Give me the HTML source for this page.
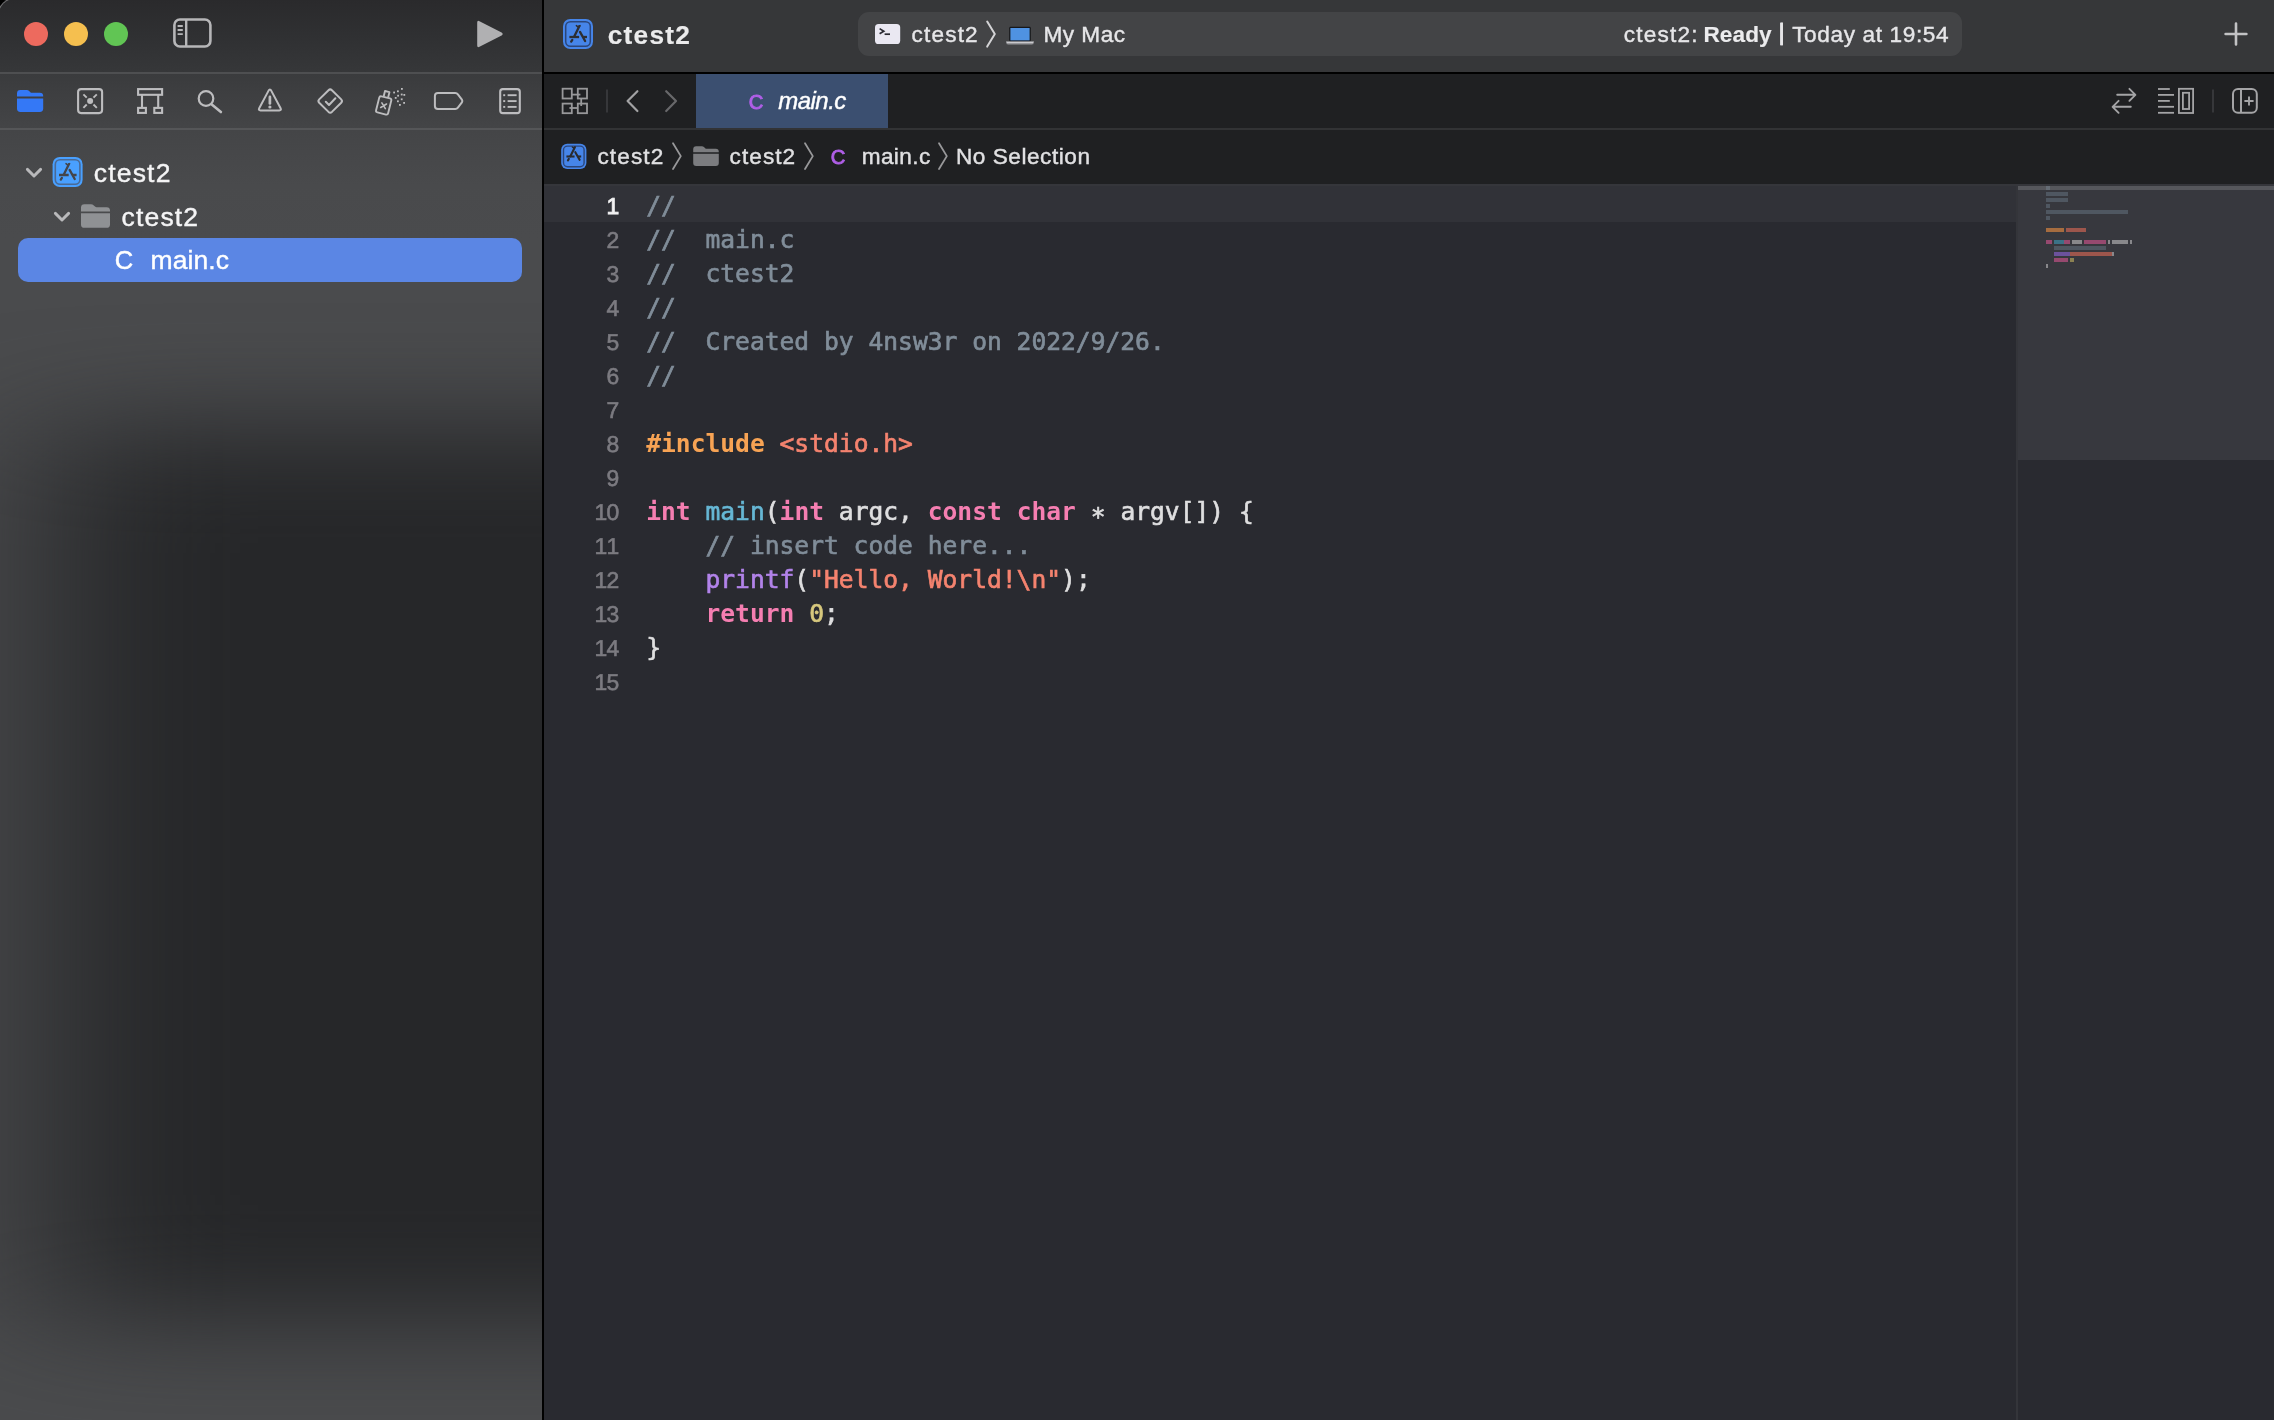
<!DOCTYPE html>
<html lang="en">
<head>
<meta charset="utf-8">
<title>ctest2 — main.c</title>
<style>
*{box-sizing:border-box;margin:0;padding:0}
html,body{width:2274px;height:1420px;background:#000}
#app{position:absolute;left:0;top:0;width:2274px;height:1420px;overflow:hidden;background:#000}
body{font-variant-ligatures:none;font-family:"Liberation Sans",sans-serif;color:#e4e4e6;position:relative}
.t{position:absolute;white-space:pre;line-height:1}
svg{position:absolute;overflow:visible}
/* ---------- sidebar ---------- */
#sidebar{position:absolute;left:-3px;top:-3px;width:545px;height:1423px;overflow:hidden;border-top-left-radius:20px;background:#4a4b4d}
#sb-in{position:absolute;left:3px;top:3px;width:542px;height:1420px}
#sb-rim{position:absolute;left:0;top:0;width:60px;height:60px;border-top-left-radius:20px;border-top:1.8px solid rgba(255,255,255,.34);border-left:1.8px solid rgba(255,255,255,.34);-webkit-mask-image:linear-gradient(135deg,#000 0,#000 30%,transparent 50%);mask-image:linear-gradient(135deg,#000 0,#000 30%,transparent 50%)}
#sb-grad{position:absolute;left:0;top:0;width:542px;height:420px;background:linear-gradient(to bottom,#2a2a2c 0px,#303133 40px,#363739 72px,#3a3b3d 74px,#3d3e40 90px,#444547 130px,#494a4c 185px,#4a4b4d 240px,#4a4b4d 420px)}
#sb-blob{position:absolute;left:44px;top:428px;width:500px;height:892px;background:#262729;filter:blur(52px);transform:scaleX(1.7);transform-origin:0 50%}
.hline{position:absolute;left:0;width:542px;height:2px}
#divider{position:absolute;left:542px;top:0;width:2px;height:1420px;background:#000}
.row-sel{position:absolute;left:18px;top:238px;width:504px;height:44px;border-radius:10px;background:#5b86e4}
/* ---------- main ---------- */
#main,#sidebar{will-change:transform}
#main{position:absolute;left:544px;top:0;width:1730px;height:1420px;background:#292a30;overflow:hidden}
#toolbar{position:absolute;left:0;top:0;width:1730px;height:72px;background:#363739}
#tb-line{position:absolute;left:0;top:72px;width:1730px;height:2px;background:#000}
#tabbar{position:absolute;left:0;top:74px;width:1730px;height:54px;background:#1f2022}
#tab{position:absolute;left:152px;top:74px;width:192px;height:54px;background:#3b4f70}
#tab-line{position:absolute;left:0;top:128px;width:1730px;height:2px;background:#323335}
#jumpbar{position:absolute;left:0;top:130px;width:1730px;height:54px;background:#1f2022}
#jb-line{position:absolute;left:0;top:184px;width:1730px;height:2px;background:#35363b}
#pill{position:absolute;left:314px;top:12px;width:1104px;height:44px;border-radius:11px;background:#434446}
#curline{position:absolute;left:0;top:186px;width:1473px;height:36px;background:#313238}
/* code */
.ln{font-kerning:none;text-rendering:geometricPrecision;position:absolute;left:0;width:74.4px;text-align:right;font-family:"Liberation Sans",sans-serif;font-size:22.9px;line-height:34px;height:34px;margin-top:0.6px;color:#7c7b81;letter-spacing:-0.75px;-webkit-text-stroke:0.6px #7c7b81}
.ln.cur{color:#f2f2f3;-webkit-text-stroke:0.85px #f2f2f3}
.cl{position:absolute;left:102.2px;font-family:"DejaVu Sans Mono","Liberation Mono",monospace;font-size:24.62px;line-height:34px;height:34px;white-space:pre;color:#dfdfe0;-webkit-text-stroke:0.65px}
.cm{color:#808d99}.kw{color:#f57eb1;font-weight:bold;-webkit-text-stroke:0}.pp{color:#f7a354;font-weight:bold;-webkit-text-stroke:0}.st{color:#f5836f}
.fn{color:#66b7d5}.lib{color:#b283ea}.nu{color:#d7c87d}.as{position:relative;top:5px}
/* minimap */
#mm-sep{position:absolute;left:1472px;top:186px;width:2px;height:1234px;background:#34353a}
#mm-view{position:absolute;left:1474px;top:186px;width:256px;height:274px;background:#37383e}
#mm-cur{position:absolute;left:1474px;top:186px;width:256px;height:4px;background:#56575c}
.mb{position:absolute;height:4px}
</style>
</head>
<body>
<div id="app">
<div id="sidebar"><div id="sb-in">
<div id="sb-grad"></div>
<div id="sb-blob"></div>
<div class="hline" style="top:72px;background:#4e4f51"></div>
<div class="hline" style="top:128px;background:#555658"></div>
<div class="row-sel"></div>
<svg width="542" height="1420" viewBox="0 0 542 1420" style="left:0;top:0" fill="none" stroke-linecap="round" stroke-linejoin="round">
  <!-- traffic lights -->
  <circle cx="36" cy="34" r="12" fill="#ed6a5e"/>
  <circle cx="76" cy="34" r="12" fill="#f5bf4f"/>
  <circle cx="116" cy="34" r="12" fill="#61c554"/>
  <!-- sidebar toggle -->
  <g stroke="#b6b6b8">
    <rect x="174.4" y="19.5" width="36" height="27" rx="5.5" stroke-width="2.6"/>
    <line x1="186.2" y1="20" x2="186.2" y2="46" stroke-width="2.4" stroke-linecap="butt"/>
    <g stroke-width="1.9" stroke-linecap="butt"><line x1="177.6" y1="26" x2="182.8" y2="26"/><line x1="177.6" y1="30" x2="182.8" y2="30"/><line x1="177.6" y1="34.1" x2="182.8" y2="34.1"/></g>
  </g>
  <!-- play -->
  <path d="M477.2 22.6 L477.2 45.4 Q477.2 48 479.5 46.8 L501.6 35.5 Q503.8 34 501.6 32.5 L479.5 21.2 Q477.2 20 477.2 22.6Z" fill="#b0b0b2"/>
  <!-- nav: folder (selected) -->
  <path d="M17 93.4 Q17 90 20.4 90 L26.6 90 Q28.2 90 29.4 91.2 L30.4 92.2 Q30.9 92.7 31.8 92.7 L39.8 92.7 Q43.2 92.7 43.2 96.1 L43.2 96.4 L17 96.4Z" fill="#3478f6"/>
  <path d="M17 98.4 L43.2 98.4 L43.2 108.6 Q43.2 112 39.8 112 L20.4 112 Q17 112 17 108.6Z" fill="#3478f6"/>
  <g stroke="#bdbdbf" stroke-width="2.1">
    <!-- source control / square x -->
    <rect x="78.1" y="89.1" width="24" height="24" rx="3"/>
    <circle cx="90.1" cy="101.1" r="3" fill="#bdbdbf" stroke="none"/>
    <g stroke-width="1.9" stroke-linecap="butt"><line x1="83.4" y1="94.4" x2="86.7" y2="97.7"/><line x1="96.8" y1="94.4" x2="93.5" y2="97.7"/><line x1="83.4" y1="107.8" x2="86.7" y2="104.5"/><line x1="96.8" y1="107.8" x2="93.5" y2="104.5"/></g>
    <!-- hierarchy -->
    <g stroke-linejoin="miter" stroke-linecap="butt">
      <rect x="138.1" y="89.1" width="24" height="5.7"/>
      <line x1="142" y1="95" x2="142" y2="107.5"/><line x1="158.2" y1="95" x2="158.2" y2="107.5"/>
      <rect x="138.1" y="107.9" width="7.8" height="5"/><rect x="154.3" y="107.9" width="7.8" height="5"/>
    </g>
    <!-- search -->
    <circle cx="206" cy="98.5" r="7.3" stroke-width="2.2"/>
    <line x1="211.8" y1="104.6" x2="220.9" y2="112" stroke-width="2.6"/>
    <!-- warning -->
    <path d="M268.6 90.6 Q269.9 88.4 271.2 90.6 L280.6 108.2 Q281.7 110.4 279.3 110.4 L260.5 110.4 Q258.1 110.4 259.2 108.2Z" stroke-width="2"/>
    <line x1="269.9" y1="96.9" x2="269.9" y2="103.4" stroke-width="2.7"/>
    <circle cx="269.9" cy="107" r="1.6" fill="#bdbdbf" stroke="none"/>
    <!-- test diamond -->
    <g transform="translate(0.2 0)"><path d="M328.3 90.2 Q330 88.6 331.7 90.2 L341 99.4 Q342.6 101 341 102.7 L331.7 111.9 Q330 113.5 328.3 111.9 L319 102.7 Q317.4 101 319 99.4Z" stroke-width="2"/>
    <path d="M325.6 101.8 L328.8 105 L335.2 98.2" stroke-width="2"/></g>
    <!-- debug spray -->
    <g transform="rotate(14 384 105)" stroke-width="1.9">
      <rect x="377.6" y="97.2" width="12.4" height="16.6" rx="1.8"/>
      <path d="M381.6 96.8 L381.6 91.2 L386.2 91.2 L386.2 96.8" stroke-linecap="butt"/>
      <path d="M381.4 103.4 L386.2 108.2 M386.2 103.4 L381.4 108.2" stroke-width="1.6"/>
    </g>
    <g fill="#bdbdbf" stroke="none" transform="translate(-0.2 0)">
      <rect x="401.2" y="88" width="1.8" height="1.8"/><rect x="397.2" y="90.4" width="1.8" height="1.8"/><rect x="393.4" y="91.6" width="1.8" height="1.8"/>
      <rect x="401" y="93.6" width="1.8" height="1.8"/><rect x="397.4" y="94.8" width="1.8" height="1.8"/><rect x="403.6" y="94" width="1.8" height="1.8"/>
      <rect x="395" y="97" width="1.8" height="1.8"/><rect x="401" y="98.4" width="1.8" height="1.8"/><rect x="397.2" y="100.4" width="1.8" height="1.8"/>
      <rect x="403.4" y="102" width="1.8" height="1.8"/><rect x="399.2" y="104" width="1.8" height="1.8"/>
    </g>
    <!-- breakpoint tag -->
    <path transform="translate(-1.1 0)" d="M439 93.1 L456.4 93.1 Q458 93.1 459 94.4 L463 99.6 Q463.9 101 463 102.4 L459 107.6 Q458 108.9 456.4 108.9 L439 108.9 Q436 108.9 436 105.9 L436 96.1 Q436 93.1 439 93.1Z" stroke-width="2"/>
    <!-- report list -->
    <rect x="500.2" y="89.1" width="19.6" height="24" rx="2.6"/>
    <g stroke-width="1.9" stroke-linecap="butt"><line x1="507.6" y1="95.2" x2="516.6" y2="95.2"/><line x1="507.6" y1="101.1" x2="516.6" y2="101.1"/><line x1="507.6" y1="106.9" x2="516.6" y2="106.9"/>
    <line x1="503.2" y1="95.2" x2="505.2" y2="95.2"/><line x1="503.2" y1="101.1" x2="505.2" y2="101.1"/><line x1="503.2" y1="106.9" x2="505.2" y2="106.9"/></g>
  </g>
  <!-- tree chevrons -->
  <g stroke="#b9b9bb" stroke-width="2.9">
    <path d="M27.4 169.4 L34 176 L40.6 169.4"/>
    <path d="M55.4 213.4 L62 220 L68.6 213.4"/>
  </g>
  <!-- project icon -->
  <g id="projicon">
    <rect x="52.6" y="157" width="30" height="30" rx="7.2" fill="#49a0ff"/>
    <rect x="55.3" y="159.7" width="24.6" height="24.6" rx="4.8" stroke="#4a6a96" stroke-width="1.6"/>
    <g stroke="#44454a" stroke-width="2.3">
      <path d="M68.9 164.2 L63.7 174.8"/>
      <path d="M66 163.7 L67.5 164.9 L69.6 163.7" stroke-width="1.6"/>
      <path d="M69.6 169.9 L74.7 179"/>
      <path d="M59 175 L68.7 175" stroke-linecap="butt"/>
      <path d="M72.8 175 L76.6 175" stroke-linecap="butt"/>
      <path d="M61.9 177.9 L60.8 179.6"/>
    </g>
  </g>
  <!-- folder gray -->
  <path d="M81 207.6 Q81 204.2 84.4 204.2 L91 204.2 Q92.6 204.2 93.8 205.4 L95 206.6 Q95.6 207.2 96.6 207.2 L106.6 207.2 Q110 207.2 110 210.6 L110 211.4 L81 211.4Z" fill="#8f9194"/>
  <path d="M81 213.2 L110 213.2 L110 224.4 Q110 227.8 106.6 227.8 L84.4 227.8 Q81 227.8 81 224.4Z" fill="#8f9194"/>
</svg>

<svg width="542" height="1420" viewBox="0 0 542 1420" style="left:0;top:0;font-family:&quot;Liberation Sans&quot;, sans-serif">
<text x="93.8" y="181.9" fill="#f4f4f5" stroke="#f4f4f5" stroke-width="0.42" style="font-size:26.5px;letter-spacing:1.18px;">ctest2</text>
<text x="121.5" y="225.6" fill="#f4f4f5" stroke="#f4f4f5" stroke-width="0.42" style="font-size:26.5px;letter-spacing:1.18px;">ctest2</text>
<text x="114.8" y="269.3" fill="#ffffff" stroke="#ffffff" stroke-width="0.5" style="font-size:25.5px;letter-spacing:0.00px;">C</text>
<text x="150.5" y="269.3" fill="#ffffff" stroke="#ffffff" stroke-width="0.42" style="font-size:26.5px;letter-spacing:0.10px;">main.c</text>
</svg>
</div><div id="sb-rim"></div></div>
<div id="divider"></div>
<div id="main">
<div id="toolbar"></div>
<div id="tb-line"></div>
<div id="tabbar"></div>
<div id="tab"></div>
<div id="tab-line"></div>
<div id="jumpbar"></div>
<div id="jb-line"></div>
<div id="pill"></div>
<div id="curline"></div>
<div id="mm-sep"></div>
<div id="mm-view"></div>
<div id="mm-cur"></div>
<div class="mb" style="left:1502px;top:186px;width:4px;background:#656c75"></div><div class="mb" style="left:1502px;top:192px;width:22px;background:#4f5761"></div><div class="mb" style="left:1502px;top:198px;width:22px;background:#4f5761"></div><div class="mb" style="left:1502px;top:204px;width:4px;background:#4f5761"></div><div class="mb" style="left:1502px;top:210px;width:82px;background:#4f5761"></div><div class="mb" style="left:1502px;top:216px;width:4px;background:#4f5761"></div><div class="mb" style="left:1502px;top:228px;width:18px;background:#a66c3f"></div><div class="mb" style="left:1522px;top:228px;width:20px;background:#9d564c"></div><div class="mb" style="left:1502px;top:240px;width:6px;background:#96496f"></div><div class="mb" style="left:1510px;top:240px;width:10px;background:#3b7287"></div><div class="mb" style="left:1520px;top:240px;width:6px;background:#96496f"></div><div class="mb" style="left:1528px;top:240px;width:10px;background:#88888b"></div><div class="mb" style="left:1540px;top:240px;width:22px;background:#96496f"></div><div class="mb" style="left:1564px;top:240px;width:2px;background:#88888b"></div><div class="mb" style="left:1568px;top:240px;width:16px;background:#88888b"></div><div class="mb" style="left:1586px;top:240px;width:2px;background:#88888b"></div><div class="mb" style="left:1510px;top:246px;width:52px;background:#4f5761"></div><div class="mb" style="left:1510px;top:252px;width:16px;background:#6c529c"></div><div class="mb" style="left:1526px;top:252px;width:42px;background:#9d564c"></div><div class="mb" style="left:1568px;top:252px;width:2px;background:#88888b"></div><div class="mb" style="left:1510px;top:258px;width:14px;background:#96496f"></div><div class="mb" style="left:1526px;top:258px;width:4px;background:#8b8152"></div><div class="mb" style="left:1502px;top:264px;width:2px;background:#88888b"></div>
<div class="ln cur" style="top:188.6px">1</div><div class="cl" style="top:188.6px"><span class="cm">//</span></div>
<div class="ln" style="top:222.6px">2</div><div class="cl" style="top:222.6px"><span class="cm">//  main.c</span></div>
<div class="ln" style="top:256.6px">3</div><div class="cl" style="top:256.6px"><span class="cm">//  ctest2</span></div>
<div class="ln" style="top:290.6px">4</div><div class="cl" style="top:290.6px"><span class="cm">//</span></div>
<div class="ln" style="top:324.6px">5</div><div class="cl" style="top:324.6px"><span class="cm">//  Created by 4nsw3r on 2022/9/26.</span></div>
<div class="ln" style="top:358.6px">6</div><div class="cl" style="top:358.6px"><span class="cm">//</span></div>
<div class="ln" style="top:392.6px">7</div><div class="cl" style="top:392.6px"></div>
<div class="ln" style="top:426.6px">8</div><div class="cl" style="top:426.6px"><span class="pp">#include </span><span class="st">&lt;stdio.h&gt;</span></div>
<div class="ln" style="top:460.6px">9</div><div class="cl" style="top:460.6px"></div>
<div class="ln" style="top:494.6px">10</div><div class="cl" style="top:494.6px"><span class="kw">int</span> <span class="fn">main</span>(<span class="kw">int</span> argc, <span class="kw">const</span> <span class="kw">char</span> <span class="as">*</span> argv[]) {</div>
<div class="ln" style="top:528.6px">11</div><div class="cl" style="top:528.6px">    <span class="cm">// insert code here...</span></div>
<div class="ln" style="top:562.6px">12</div><div class="cl" style="top:562.6px">    <span class="lib">printf</span>(<span class="st">&quot;Hello, World!\n&quot;</span>);</div>
<div class="ln" style="top:596.6px">13</div><div class="cl" style="top:596.6px">    <span class="kw">return</span> <span class="nu">0</span>;</div>
<div class="ln" style="top:630.6px">14</div><div class="cl" style="top:630.6px">}</div>
<div class="ln" style="top:664.6px">15</div><div class="cl" style="top:664.6px"></div>
<svg width="1730" height="1420" viewBox="544 0 1730 1420" style="left:0;top:0" fill="none" stroke-linecap="round" stroke-linejoin="round">
  <!-- title project icon -->
  <g>
    <rect x="563" y="19" width="30" height="30" rx="7.2" fill="#4685e9"/>
    <rect x="565.7" y="21.7" width="24.6" height="24.6" rx="4.8" stroke="#2b467a" stroke-width="1.5"/>
    <g stroke="#2d2e32" stroke-width="2.3" transform="translate(510.4 -138)">
      <path d="M68.9 164.2 L63.7 174.8"/>
      <path d="M66 163.7 L67.5 164.9 L69.6 163.7" stroke-width="1.6"/>
      <path d="M69.6 169.9 L74.7 179"/>
      <path d="M59 175 L68.7 175" stroke-linecap="butt"/>
      <path d="M72.8 175 L76.6 175" stroke-linecap="butt"/>
      <path d="M61.9 177.9 L60.8 179.6"/>
    </g>
  </g>
  <!-- scheme terminal icon -->
  <rect x="875" y="24" width="25.2" height="20" rx="3.6" fill="#eae8f2"/>
  <path d="M879.6 28.6 L883.8 31.2 L879.6 33.8" stroke="#2b2b33" stroke-width="1.7" stroke-linecap="butt" stroke-linejoin="miter"/>
  <line x1="884.6" y1="34.2" x2="890" y2="34.2" stroke="#2b2b33" stroke-width="1.7" stroke-linecap="butt"/>
  <!-- pill chevron -->
  <path d="M987.2 21.6 L994.8 34.1 L987.2 46.6" stroke="#d4d4d6" stroke-width="2"/>
  <!-- laptop -->
  <rect x="1009.2" y="26.8" width="21.6" height="14.6" rx="1.4" fill="#16171a"/>
  <rect x="1010.4" y="28" width="19.2" height="12.4" fill="#4f92e2"/>
  <path d="M1006 41.4 L1034 41.4 L1033.2 43.6 Q1033 44.2 1032 44.2 L1008 44.2 Q1007 44.2 1006.8 43.6Z" fill="#c9c9cd"/>
  <rect x="1006.6" y="43.2" width="26.8" height="1" fill="#8c8c90"/>
  <!-- plus -->
  <path d="M2225.6 34 L2246.4 34 M2236 23.6 L2236 44.4" stroke="#c2c2c4" stroke-width="2.6"/>
  <!-- tabbar left: grid -->
  <g stroke="#98989a" stroke-width="1.8" stroke-linejoin="miter" stroke-linecap="butt">
    <rect x="562.6" y="88.7" width="9.2" height="9.8"/>
    <rect x="577.8" y="88.7" width="9.2" height="9.8"/>
    <rect x="562.6" y="103.6" width="9.2" height="9.6"/>
    <rect x="577.8" y="103.6" width="9.2" height="9.6"/>
    <line x1="571.8" y1="94.6" x2="580.4" y2="94.6"/>
    <line x1="581.2" y1="98.5" x2="581.2" y2="106"/>
    <line x1="569.4" y1="108" x2="577.8" y2="108"/>
  </g>
  <line x1="607" y1="89.4" x2="607" y2="112.6" stroke="#3d3e41" stroke-width="1.6" stroke-linecap="butt"/>
  <path d="M637.4 91.2 L627.6 101.1 L637.4 111" stroke="#a2a2a4" stroke-width="2.2"/>
  <path d="M666.2 91.2 L676 101.1 L666.2 111" stroke="#68686b" stroke-width="2.2"/>
  <!-- jumpbar icon -->
  <g>
    <rect x="561.2" y="143.8" width="25.2" height="25.2" rx="6" fill="#4685e9"/>
    <rect x="563.5" y="146.1" width="20.6" height="20.6" rx="4" stroke="#2b467a" stroke-width="1.4"/>
    <g stroke="#2a2b2f" stroke-width="2.5" transform="translate(516.85 9.5) scale(0.84)">
      <path d="M68.9 164.2 L63.7 174.8"/>
      <path d="M66 163.7 L67.5 164.9 L69.6 163.7" stroke-width="1.6"/>
      <path d="M69.6 169.9 L74.7 179"/>
      <path d="M59 175 L68.7 175" stroke-linecap="butt"/>
      <path d="M72.8 175 L76.6 175" stroke-linecap="butt"/>
      <path d="M61.9 177.9 L60.8 179.6"/>
    </g>
  </g>
  <!-- jumpbar chevrons -->
  <g stroke="#98989a" stroke-width="1.8">
    <path d="M673 143.2 L680.8 156.1 L673 169"/>
    <path d="M805 143.2 L812.8 156.1 L805 169"/>
    <path d="M939 143.2 L946.8 156.1 L939 169"/>
  </g>
  <!-- jumpbar folder -->
  <path d="M693.2 149.2 Q693.2 146.2 696.2 146.2 L701.8 146.2 Q703.2 146.2 704.2 147.2 L705.2 148.2 Q705.8 148.8 706.8 148.8 L715.8 148.8 Q718.8 148.8 718.8 151.8 L718.8 152.2 L693.2 152.2Z" fill="#7b7c7f"/>
  <path d="M693.2 153.8 L718.8 153.8 L718.8 163 Q718.8 166 715.8 166 L696.2 166 Q693.2 166 693.2 163Z" fill="#7b7c7f"/>
  <!-- tabbar right icons -->
  <g stroke="#a4a4a6" stroke-width="1.9">
    <path d="M2117.2 94.8 L2135.2 94.8 M2129.4 88.8 L2135.4 94.8 L2129.4 100.8"/>
    <path d="M2130.8 106.8 L2112.8 106.8 M2118.6 100.8 L2112.6 106.8 L2118.6 112.8"/>
  </g>
  <g stroke="#a4a4a6" stroke-width="1.8" stroke-linecap="butt" stroke-linejoin="miter">
    <line x1="2158" y1="89" x2="2169.8" y2="89"/><line x1="2158" y1="94.9" x2="2174" y2="94.9"/><line x1="2158" y1="100.9" x2="2169.8" y2="100.9"/><line x1="2158" y1="106.8" x2="2174" y2="106.8"/><line x1="2158" y1="112.8" x2="2174" y2="112.8"/>
    <rect x="2178.9" y="88.8" width="14.2" height="24.2"/>
    <rect x="2182.9" y="92.8" width="6.2" height="16.2"/>
  </g>
  <line x1="2213" y1="89.4" x2="2213" y2="112.4" stroke="#3d3e41" stroke-width="1.6" stroke-linecap="butt"/>
  <g stroke="#a4a4a6" stroke-width="2">
    <rect x="2233" y="89" width="23.8" height="23.8" rx="5"/>
    <line x1="2241" y1="89.4" x2="2241" y2="112.4" stroke-linecap="butt"/>
    <path d="M2244.4 101 L2253.6 101 M2249 96.4 L2249 105.6" stroke-width="1.9" stroke-linecap="butt"/>
  </g>
</svg>

<svg width="1730" height="1420" viewBox="544 0 1730 1420" style="left:0;top:0;font-family:&quot;Liberation Sans&quot;, sans-serif">
<text x="607.7" y="43.9" fill="#ebebec" stroke="#ebebec" stroke-width="0.15" style="font-size:26.3px;letter-spacing:1.24px;font-weight:bold">ctest2</text>
<text x="911.6" y="42.0" fill="#e6e6e8" stroke="#e6e6e8" stroke-width="0.42" style="font-size:22.6px;letter-spacing:1.16px;">ctest2</text>
<text x="1043.5" y="42.0" fill="#e6e6e8" stroke="#e6e6e8" stroke-width="0.42" style="font-size:22.6px;letter-spacing:0.48px;">My Mac</text>
<text x="1623.7" y="41.8" fill="#e6e6e8" stroke="#e6e6e8" stroke-width="0.42" style="font-size:22.6px;letter-spacing:1.23px;">ctest2:</text>
<text x="1703.4" y="41.8" fill="#ececee" stroke="#ececee" stroke-width="0.15" style="font-size:22.6px;letter-spacing:0.10px;font-weight:bold">Ready</text>
<text x="1792.2" y="41.8" fill="#e6e6e8" stroke="#e6e6e8" stroke-width="0.42" style="font-size:22.6px;letter-spacing:0.63px;">Today at 19:54</text>
<text x="1778.5" y="40.0" fill="#e6e6e8" stroke="#e6e6e8" stroke-width="0.7" style="font-size:23.4px;letter-spacing:0.00px;">|</text>
<text x="748.7" y="109.2" fill="#b05fe8" stroke="#b05fe8" stroke-width="0.9" style="font-size:20.2px;letter-spacing:0.00px;">C</text>
<text x="778.3" y="109.2" fill="#ffffff" stroke="#ffffff" stroke-width="0.42" style="font-size:24px;letter-spacing:-0.54px;font-style:italic">main.c</text>
<text x="597.4" y="164.2" fill="#e0e0e2" stroke="#e0e0e2" stroke-width="0.42" style="font-size:22.6px;letter-spacing:1.12px;">ctest2</text>
<text x="729.6" y="164.2" fill="#e0e0e2" stroke="#e0e0e2" stroke-width="0.42" style="font-size:22.6px;letter-spacing:1.06px;">ctest2</text>
<text x="830.7" y="164.2" fill="#b05fe8" stroke="#b05fe8" stroke-width="0.9" style="font-size:20.2px;letter-spacing:0.00px;">C</text>
<text x="861.7" y="164.2" fill="#e0e0e2" stroke="#e0e0e2" stroke-width="0.42" style="font-size:22.6px;letter-spacing:0.40px;">main.c</text>
<text x="955.9" y="164.2" fill="#e0e0e2" stroke="#e0e0e2" stroke-width="0.42" style="font-size:22.6px;letter-spacing:0.55px;">No Selection</text>
<rect x="1780.6" y="22.6" width="2.3" height="22.6" fill="#e6e6e8"/>
</svg>
</div>
</div>
</body>
</html>
